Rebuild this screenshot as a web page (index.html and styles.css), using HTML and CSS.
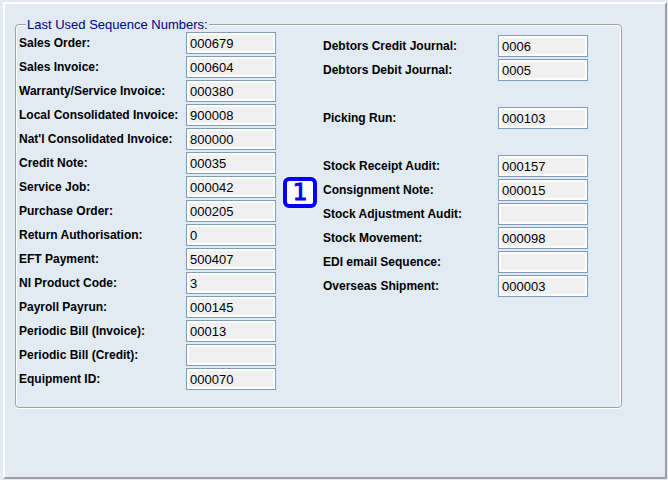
FILE: index.html
```html
<!DOCTYPE html>
<html lang="en">
<head>
<meta charset="utf-8">
<title>Last Used Sequence Numbers</title>
<link rel="stylesheet" href="styles.css">
</head>
<body>
<main class="panel">
  <fieldset class="group">
    <legend class="group-title">Last Used Sequence Numbers:</legend>
    <div class="columns">
      <div class="list">
        <div class="row"><label for="sales-order">Sales Order:</label><input id="sales-order" value="000679" readonly></div>
        <div class="row"><label for="sales-invoice">Sales Invoice:</label><input id="sales-invoice" value="000604" readonly></div>
        <div class="row"><label for="warranty">Warranty/Service Invoice:</label><input id="warranty" value="000380" readonly></div>
        <div class="row"><label for="local">Local Consolidated Invoice:</label><input id="local" value="900008" readonly></div>
        <div class="row"><label for="national">Nat'l Consolidated Invoice:</label><input id="national" value="800000" readonly></div>
        <div class="row"><label for="credit-note">Credit Note:</label><input id="credit-note" value="00035" readonly></div>
        <div class="row"><label for="service-job">Service Job:</label><input id="service-job" value="000042" readonly></div>
        <div class="row"><label for="purchase">Purchase Order:</label><input id="purchase" value="000205" readonly></div>
        <div class="row"><label for="return">Return Authorisation:</label><input id="return" value="0" readonly></div>
        <div class="row"><label for="eft">EFT Payment:</label><input id="eft" value="500407" readonly></div>
        <div class="row"><label for="ni">NI Product Code:</label><input id="ni" value="3" readonly></div>
        <div class="row"><label for="payroll">Payroll Payrun:</label><input id="payroll" value="000145" readonly></div>
        <div class="row"><label for="bill-invoice">Periodic Bill (Invoice):</label><input id="bill-invoice" value="00013" readonly></div>
        <div class="row"><label for="bill-credit">Periodic Bill (Credit):</label><input id="bill-credit" value="" readonly></div>
        <div class="row"><label for="equipment">Equipment ID:</label><input id="equipment" value="000070" readonly></div>
      </div>
      <div class="marker"><span class="marker-box">1</span></div>
      <div class="list list-right">
        <div class="row"><label for="debtors-credit">Debtors Credit Journal:</label><input id="debtors-credit" value="0006" readonly></div>
        <div class="row"><label for="debtors-debit">Debtors Debit Journal:</label><input id="debtors-debit" value="0005" readonly></div>
        <div class="row row-spaced"><label for="picking">Picking Run:</label><input id="picking" value="000103" readonly></div>
        <div class="row row-spaced"><label for="receipt">Stock Receipt Audit:</label><input id="receipt" value="000157" readonly></div>
        <div class="row"><label for="consignment">Consignment Note:</label><input id="consignment" value="000015" readonly></div>
        <div class="row"><label for="adjustment">Stock Adjustment Audit:</label><input id="adjustment" value="" readonly></div>
        <div class="row"><label for="movement">Stock Movement:</label><input id="movement" value="000098" readonly></div>
        <div class="row"><label for="edi">EDI email Sequence:</label><input id="edi" value="" readonly></div>
        <div class="row"><label for="overseas">Overseas Shipment:</label><input id="overseas" value="000003" readonly></div>
      </div>
    </div>
  </fieldset>
</main>
</body>
</html>
```
FILE: styles.css
```css
* {
  box-sizing: border-box;
}

body {
  display: flex;
  min-height: 100vh;
  margin: 0;
  padding: 2px 1px 1px 3px;
  background: #e2eaf3;
  color: #000;
  font-family: "Liberation Sans", Arial, sans-serif;
  font-size: 12px;
}

.panel {
  flex: 1;
  padding: 13px 10px;
  border: 2px solid;
  border-color: #fff #a0a0a0 #a0a0a0 #fff;
}

.group {
  max-width: 607px;
  margin: 0;
  padding: 0 3px 17px;
  border: 1px solid #a0a0a0;
  border-radius: 4px;
  box-shadow: inset 1px 1px 0 #fff, inset -1px 0 0 #fff, 0 1px 0 #fff;
}

.group-title {
  margin-left: 7px;
  padding: 0 1px;
  background: #e2eaf3;
  color: #00008b;
  font-size: 13px;
  line-height: 15px;
}

.columns {
  display: flex;
  align-items: flex-start;
}

.list {
  display: flex;
  flex-direction: column;
  gap: 2px;
}

.list-right {
  padding-top: 3px;
}

.row {
  display: grid;
  grid-template-columns: 167px 90px;
  align-items: center;
}

.list-right .row {
  grid-template-columns: 175px 90px;
}

.row-spaced {
  margin-top: 24px;
}

label {
  font-weight: bold;
  white-space: nowrap;
}

input {
  width: 100%;
  height: 22px;
  margin: 0;
  padding: 0 1px 0 3px;
  border: 1px solid #7f9db9;
  border-radius: 0;
  outline: 0;
  box-shadow: inset 0 0 0 2px #fff;
  background: #f0f0f0;
  color: #000;
  font-family: inherit;
  font-size: 13px;
}

.marker {
  width: 34px;
  margin: 145px 6px 0 7px;
  background: #fff;
}

.marker-box {
  display: block;
  height: 31px;
  border: 4px solid #00f;
  border-radius: 6px;
  color: #00f;
  font-family: "DejaVu Sans", Verdana, sans-serif;
  font-size: 23px;
  line-height: 23px;
  text-align: center;
  -webkit-text-stroke: 1px #00f;
}
```
